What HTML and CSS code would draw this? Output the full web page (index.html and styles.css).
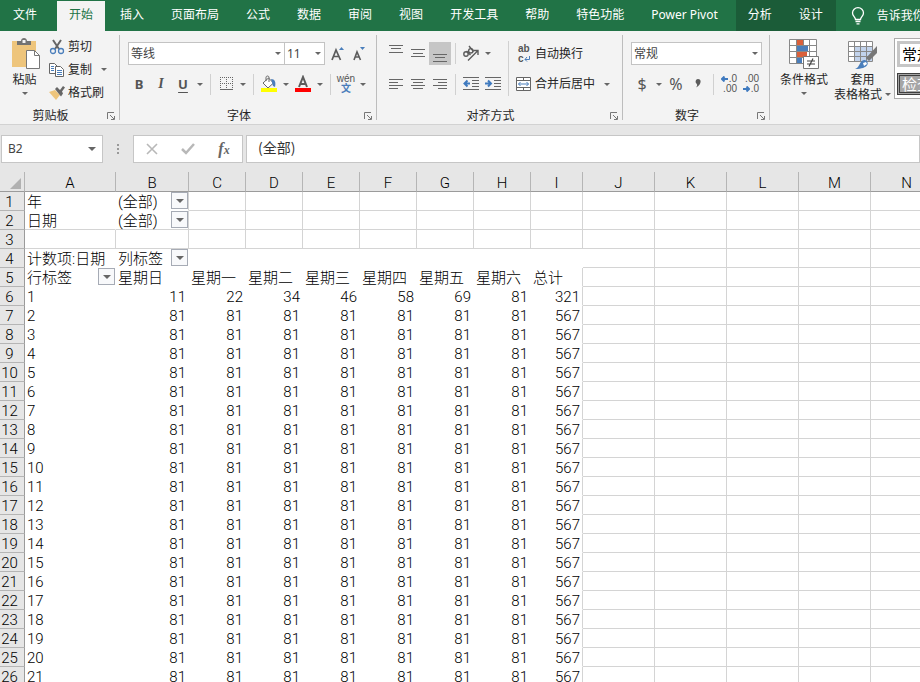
FILE: index.html
```html
<!DOCTYPE html>
<html lang="zh-CN">
<head>
    <meta charset="UTF-8">
    <meta name="viewport" content="width=device-width, initial-scale=1.0">
    <title>数据透视表</title>
    <link rel="stylesheet" href="styles.css">
</head>
<body>
    <!-- 選單 -->
    <nav class="tabs">
        <a class="tab file" href="#">文件</a>
        <a class="tab active" href="#">开始</a>
        <a class="tab" href="#">插入</a>
        <a class="tab" href="#">页面布局</a>
        <a class="tab" href="#">公式</a>
        <a class="tab" href="#">数据</a>
        <a class="tab" href="#">审阅</a>
        <a class="tab" href="#">视图</a>
        <a class="tab" href="#">开发工具</a>
        <a class="tab" href="#">帮助</a>
        <a class="tab" href="#">特色功能</a>
        <a class="tab" href="#">Power Pivot</a>
        <div class="context-tabs">
            <a class="tab" href="#">分析</a>
            <a class="tab" href="#">设计</a>
        </div>
        <a class="tell-me" href="#">
            <svg width="14" height="18" viewBox="0 0 14 18" fill="none" stroke="#fff" stroke-width="1.3"><path d="M4.5 12.5c0-2.500-3-3.500-3-6.500a5.500 5.300 0 0 1 11 0c0 3-3 4-3 6.500zM4.500 14.500h5M5.500 16.800h3"/></svg>
            告诉我你想要做什么
        </a>
    </nav>

    <!-- 功能區 -->
    <div class="ribbon">
        <section class="group clipboard">
            <div class="group-body">
                <button class="big-btn">
                    <svg width="30" height="32" viewBox="0 0 30 32"><path fill="#eec57c" d="M2 3h24v26H2z"/><path fill="#737373" d="M7 3h4c0-4 6-4 6 0h4v4H7z"/><path fill="#f3f3f3" d="M12.500 2h3v3h-3z"/><path fill="#fff" stroke="#777" d="M16.500 12.500h8l5 5v13h-13z"/><path fill="none" stroke="#777" d="M24.500 12.500v5h5"/></svg>
                    <span>粘贴</span>
                    <i class="arrow"></i>
                </button>
                <div class="btn-list">
                    <button class="text-btn">
                        <svg width="16" height="16" viewBox="0 0 16 16" fill="none"><path stroke="#666" stroke-width="2" d="M4 1l6 9M12 1l-6 9"/><circle cx="4" cy="12" r="2.500" stroke="#4a7ebb" stroke-width="1.300"/><circle cx="12" cy="12" r="2.500" stroke="#4a7ebb" stroke-width="1.300"/></svg>
                        剪切
                    </button>
                    <button class="text-btn">
                        <svg width="16" height="16" viewBox="0 0 16 16" fill="#fff" stroke="#666"><path d="M.5 1.500h5l3 3v7h-8z"/><path stroke="#4a7ebb" d="M2 4.500h3M2 6.500h3M2 8.500h3"/><path d="M6.500 4.500h5l3 3v7h-8z"/><path stroke="#4a7ebb" d="M8 8.500h5M8 10.500h5M8 12.500h5"/></svg>
                        复制
                        <i class="arrow"></i>
                    </button>
                    <button class="text-btn">
                        <svg width="16" height="16" viewBox="0 0 16 16"><path fill="#eec57c" d="M0 7l6-2 5 5-4 5z"/><path fill="#666" d="M6 4l2-2 3 3 3-4 2 1.500-3 4 1 2-2 3z"/></svg>
                        格式刷
                    </button>
                </div>
            </div>
            <div class="group-title">剪贴板 <svg class="launcher" width="9" height="9" viewBox="0 0 9 9"><path d="M.5 7V.5H7M3 3l4 4M7.500 4v3.500H4"/></svg></div>
        </section>
        <div class="line"></div>

        <section class="group font">
            <div class="group-body rows">
                <div class="row">
                    <div class="select-box font-name">
                        <select aria-label="字体"><option>等线</option></select><i class="arrow"></i>
                    </div>
                    <div class="select-box font-size">
                        <select aria-label="字号"><option>11</option></select><i class="arrow"></i>
                    </div>
                    <button class="icon-btn" aria-label="增大字号"><svg width="16" height="18" viewBox="0 0 16 18"><path fill="none" stroke="#5c5c5c" stroke-width="1.700" d="M2 15L6 5l4.500 10M3.500 11.500h5.500"/><path fill="#4a7ebb" d="M9 5l2.500-3L14 5z"/></svg></button>
                    <button class="icon-btn" aria-label="减小字号"><svg width="16" height="18" viewBox="0 0 16 18"><path fill="none" stroke="#5c5c5c" stroke-width="1.600" d="M2 15l3-8 3.500 8M3 12h4.500"/><path fill="#4a7ebb" d="M8 2h5l-2.500 3z"/></svg></button>
                </div>
                <div class="row">
                    <button class="icon-btn bold">B</button>
                    <button class="icon-btn italic">I</button>
                    <button class="icon-btn underline">U</button>
                    <button class="drop" aria-label="下划线"><i class="arrow"></i></button>
                    <span class="sep"></span>
                    <button class="icon-btn" aria-label="边框"><svg width="13" height="14" viewBox="0 0 13 14" fill="none" stroke="#666"><path stroke-dasharray="1 1" d="M0 .5h13M0 6.500h13M.5 0v12M6.500 0v12M12.500 0v12"/><path d="M0 12.500h13"/></svg></button>
                    <button class="drop" aria-label="边框选项"><i class="arrow"></i></button>
                    <span class="sep"></span>
                    <button class="icon-btn" aria-label="填充颜色"><svg width="16" height="18" viewBox="0 0 16 18"><path fill="#fff" stroke="#666" d="M7.500 3l5 5-5.500 5-5-5z"/><path fill="none" stroke="#666" d="M5 6V2.500C5 .5 8 .5 8 2.500V7"/><path fill="#4a7ebb" d="M10 4c4 0 5 3 4 8l-2-1z"/><path fill="#ff0" d="M0 13h16v4H0z"/></svg></button>
                    <button class="drop" aria-label="填充颜色选项"><i class="arrow"></i></button>
                    <button class="icon-btn" aria-label="字体颜色"><svg width="16" height="18" viewBox="0 0 16 18"><path fill="none" stroke="#5c5c5c" stroke-width="2" d="M4 12L8 2l4 10M5 9h6"/><path fill="#f00" d="M0 13h16v4H0z"/></svg></button>
                    <button class="drop" aria-label="字体颜色选项"><i class="arrow"></i></button>
                    <span class="sep"></span>
                    <button class="icon-btn pinyin"><span>wén</span><b>文</b></button>
                    <button class="drop" aria-label="拼音选项"><i class="arrow"></i></button>
                </div>
            </div>
            <div class="group-title">字体 <svg class="launcher" width="9" height="9" viewBox="0 0 9 9"><path d="M.5 7V.5H7M3 3l4 4M7.500 4v3.500H4"/></svg></div>
        </section>
        <div class="line"></div>

        <section class="group align">
            <div class="group-body">
                <div class="rows">
                    <div class="row">
                        <button class="icon-btn" aria-label="顶端对齐"><svg class="bars" width="14" height="18" viewBox="0 0 14 18"><path d="M0 .5h14M2 3.500h10M0 7.500h14"/></svg></button>
                        <button class="icon-btn" aria-label="垂直居中"><svg class="bars" width="14" height="18" viewBox="0 0 14 18"><path d="M0 4.500h14M2 8.500h10M0 11.500h14"/></svg></button>
                        <button class="icon-btn pressed" aria-label="底端对齐"><svg class="bars" width="14" height="18" viewBox="0 0 14 18"><path d="M0 9.500h14M2 12.500h10M0 16.500h14"/></svg></button>
                        <span class="sep"></span>
                        <button class="icon-btn" aria-label="方向"><svg width="18" height="18" viewBox="0 0 18 18" fill="none" stroke="#5c5c5c" stroke-width="1.400"><circle cx="4" cy="9" r="2.200"/><path d="M4.500 6l4 4M7 1l4.500 5.500"/><circle cx="8.800" cy="5.800" r="2.200"/><path d="M6 15.500l9.500-9.500M11.500 5.500H16V10"/></svg></button>
                        <button class="drop" aria-label="方向选项"><i class="arrow"></i></button>
                    </div>
                    <div class="row">
                        <button class="icon-btn" aria-label="左对齐"><svg class="bars" width="14" height="12" viewBox="0 0 14 12"><path d="M0 1.500h14M0 4.500h9M0 7.500h14M0 10.500h9"/></svg></button>
                        <button class="icon-btn" aria-label="居中"><svg class="bars" width="14" height="12" viewBox="0 0 14 12"><path d="M0 1.500h14M2 4.500h10M0 7.500h14M2 10.500h10"/></svg></button>
                        <button class="icon-btn" aria-label="右对齐"><svg class="bars" width="14" height="12" viewBox="0 0 14 12"><path d="M0 1.500h14M5 4.500h9M0 7.500h14M5 10.500h9"/></svg></button>
                        <span class="sep"></span>
                        <button class="icon-btn" aria-label="减少缩进量"><svg class="bars" width="16" height="14" viewBox="0 0 16 14"><path d="M0 .5h16M9 3.500h7M9 6.500h7M9 9.500h7M0 12.500h16"/><path class="blue" d="M7 6.500H1M4.500 3.500L1.500 6.500l3 3"/></svg></button>
                        <button class="icon-btn" aria-label="增加缩进量"><svg class="bars" width="16" height="14" viewBox="0 0 16 14"><path d="M0 .5h16M9 3.500h7M9 6.500h7M9 9.500h7M0 12.500h16"/><path class="blue" d="M0 6.500h6M3 3.500l3 3-3 3"/></svg></button>
                    </div>
                </div>
                <span class="sep tall"></span>
                <div class="rows">
                    <button class="text-btn">
                        <span class="wrap-icon"><b>ab</b><b>c<svg width="6" height="6" viewBox="0 0 6 6" fill="none" stroke="#4a7ebb"><path d="M5.500 0v3.500H1M3 1L1 3.500l2 2"/></svg></b></span>
                        自动换行
                    </button>
                    <button class="text-btn">
                        <svg width="16" height="16" viewBox="0 0 16 16"><path fill="#fff" stroke="#666" d="M.5 1.500h14v13H.5zM.5 4.500h14M.5 11.500h14M7.500 1v3M7.500 12v3"/><path fill="none" stroke="#4a7ebb" d="M2.500 8h10M4.500 6l-2 2 2 2M10.500 6l2 2-2 2"/></svg>
                        合并后居中
                        <i class="arrow"></i>
                    </button>
                </div>
            </div>
            <div class="group-title">对齐方式 <svg class="launcher" width="9" height="9" viewBox="0 0 9 9"><path d="M.5 7V.5H7M3 3l4 4M7.500 4v3.500H4"/></svg></div>
        </section>
        <div class="line"></div>

        <section class="group number">
            <div class="group-body rows">
                <div class="row">
                    <div class="select-box format">
                        <select aria-label="数字格式"><option>常规</option></select><i class="arrow"></i>
                    </div>
                </div>
                <div class="row">
                    <button class="icon-btn sign">$</button>
                    <button class="drop" aria-label="货币选项"><i class="arrow"></i></button>
                    <button class="icon-btn sign">%</button>
                    <button class="icon-btn" aria-label="千位分隔"><svg width="6" height="10" viewBox="0 0 6 10"><path fill="#5c5c5c" d="M3 0c4 0 3.500 6-2 8.500C3 6 2 5 1 4 0 2.500 1 0 3 0z"/></svg></button>
                    <span class="sep"></span>
                    <button class="icon-btn decimal"><span><svg width="7" height="6" viewBox="0 0 7 6"><path d="M7 3H1M3.500 .5L1 3l2.500 2.500"/></svg>.0</span><span>.00</span></button>
                    <button class="icon-btn decimal"><span>.00</span><span><svg width="7" height="6" viewBox="0 0 7 6"><path d="M0 3h6M3.500 .5L6 3 3.500 5.500"/></svg>.0</span></button>
                </div>
            </div>
            <div class="group-title">数字 <svg class="launcher" width="9" height="9" viewBox="0 0 9 9"><path d="M.5 7V.5H7M3 3l4 4M7.500 4v3.500H4"/></svg></div>
        </section>
        <div class="line"></div>

        <section class="group styles">
            <div class="group-body">
                <button class="big-btn">
                    <svg width="30" height="32" viewBox="0 0 30 32"><path fill="#fff" d="M.5 1.500h27v24H.5z"/><path fill="#d9603b" d="M8 2h6v5H8zM8 14h10v5H8z"/><path fill="#4a7ebb" d="M8 8h11v5H8zM8 20h5v5H8z"/><path fill="none" stroke="#888" d="M.5 1.500h27v24H.5zM.5 7.500h27M.5 13.500h27M.5 19.500h27M7.500 1v25M14.500 1v6M20.500 1v24"/><path fill="#fff" stroke="#777" d="M14.500 18.500h15v12h-15z"/><path stroke="#444" stroke-width="1.200" d="M18 23h8M18 26h8M24 20.500l-4 8"/></svg>
                    <span>条件格式</span>
                    <i class="arrow"></i>
                </button>
                <button class="big-btn">
                    <svg width="30" height="32" viewBox="0 0 30 32"><path fill="#fff" d="M.5 3.500h24v20H.5z"/><path fill="#c2d3ec" d="M7 9h17v14H7z"/><path fill="none" stroke="#888" d="M.5 3.500h24v20H.5zM.5 8.500h24M.5 13.500h24M.5 18.500h24M6.500 3v21M12.500 3v21M18.500 3v21"/><path fill="#777" d="M29 8v7l-8 8-3-3z"/><path fill="#4a7ebb" d="M7 31c5-1 4-9 10-9 5 2 4 9-10 9z"/><path fill="#fff" d="M15 25l3-1 1 2-3 2z"/></svg>
                    <span>套用</span>
                    <span class="nowrap">表格格式<i class="arrow"></i></span>
                </button>
                <div class="gallery">
                    <button class="style-item normal">常规</button>
                    <button class="style-item check">检查单元格</button>
                </div>
            </div>
        </section>
    </div>

    <!-- 編輯列 -->
    <div class="formula-bar">
        <div class="name-box">
            <input type="text" value="B2" aria-label="名称框"><i class="arrow wide"></i>
        </div>
        <svg class="dots" width="3" height="12" viewBox="0 0 3 12"><path fill="#999" d="M0 0h2v2H0zM0 4h2v2H0zM0 8h2v2H0z"/></svg>
        <div class="formula-btns">
            <button aria-label="取消"><svg width="12" height="12" viewBox="0 0 12 12" fill="none" stroke="#b8b8b8" stroke-width="1.600"><path d="M1 1l10 10M11 1L1 11"/></svg></button>
            <button aria-label="输入"><svg width="14" height="12" viewBox="0 0 14 12" fill="none" stroke="#b8b8b8" stroke-width="2.500"><path d="M1 6l4 4 8-9"/></svg></button>
            <button class="fx">f<small>x</small></button>
        </div>
        <input class="formula" type="text" value="(全部)" aria-label="编辑栏">
    </div>

    <!-- 工作表 -->
    <div class="sheet">
        <table>
            <colgroup>
                <col class="w-head"><col class="w-a"><col class="w-b">
                <col class="w-day"><col class="w-day"><col class="w-day"><col class="w-day"><col class="w-day"><col class="w-day">
                <col class="w-total"><col class="w-std"><col class="w-std"><col class="w-std"><col class="w-std"><col class="w-std">
            </colgroup>
            <thead>
                <tr>
                    <th class="corner"><svg width="11" height="11" viewBox="0 0 11 11"><path fill="#b1b1b1" d="M11 0v11H0z"/></svg></th>
                    <th>A</th><th>B</th><th>C</th><th>D</th><th>E</th><th>F</th><th>G</th><th>H</th><th>I</th><th>J</th><th>K</th><th>L</th><th>M</th><th>N</th>
                </tr>
            </thead>
            <tbody id="rows">
                <tr>
                    <th>1</th><td class="no-line">年</td>
                    <td class="no-bottom"><div class="filter">(全部)<button aria-label="筛选年"><i class="arrow wide"></i></button></div></td>
                    <td></td><td></td><td></td><td></td><td></td><td></td><td></td><td></td><td></td><td></td><td></td><td></td>
                </tr>
                <tr>
                    <th>2</th><td class="no-right">日期</td>
                    <td><div class="filter">(全部)<button aria-label="筛选日期"><i class="arrow wide"></i></button></div></td>
                    <td></td><td></td><td></td><td></td><td></td><td></td><td></td><td></td><td></td><td></td><td></td><td></td>
                </tr>
                <tr>
                    <th>3</th><td></td><td></td><td></td><td></td><td></td><td></td><td></td><td></td><td></td><td></td><td></td><td></td><td></td><td></td>
                </tr>
                <tr>
                    <th>4</th><td class="no-line">计数项:日期</td>
                    <td class="no-line"><div class="filter">列标签<button aria-label="筛选列标签"><i class="arrow wide"></i></button></div></td>
                    <td class="no-line"></td><td class="no-line"></td><td class="no-line"></td><td class="no-line"></td><td class="no-line"></td><td class="no-line"></td><td class="no-line"></td>
                    <td></td><td></td><td></td><td></td><td></td>
                </tr>
                <tr>
                    <th>5</th>
                    <td class="no-line"><div class="filter">行标签<button aria-label="筛选行标签"><i class="arrow wide"></i></button></div></td>
                    <td class="no-line">星期日</td><td class="no-line">星期一</td><td class="no-line">星期二</td><td class="no-line">星期三</td><td class="no-line">星期四</td><td class="no-line">星期五</td><td class="no-line">星期六</td><td class="no-bottom">总计</td>
                    <td></td><td></td><td></td><td></td><td></td>
                </tr>
            </tbody>
        </table>
    </div>

    <script>
        let rows=document.querySelector('#rows')
        let first=[11, 22, 34, 46, 58, 69, 81, 321]
        let other=[81, 81, 81, 81, 81, 81, 81, 567]

        /* 先列出1~21日，從第6列開始 */
        for(let day=1; day<=21; day++){
            let values=day === 1 ? first : other
            let html=`<th>${day + 5}</th><td class="no-line">${day}</td>`

            values.forEach(function(value, i){
                html+=`<td class="num ${i === 7 ? "no-bottom" : "no-line"}">${value}</td>`
            })

            html+="<td></td>".repeat(5)
            let tr=document.createElement('tr')
            tr.innerHTML=html
            rows.appendChild(tr)
        }
    </script>
</body>
</html>
```

FILE: styles.css
```css
*{
    box-sizing: border-box;
    margin: 0px;
    padding: 0px;
}
body{
    height: 100vh;
    display: flex;
    flex-direction: column;
    overflow: hidden;
    background: white;
    color: #262626;
    font: 12px/16px "Noto Sans", "Noto Sans CJK SC", sans-serif;
}
button, input, select{
    font: inherit;
    color: inherit;
    background: none;
    border: 0;
    border-radius: 0;
}
svg{
    display: block;
    flex: none;
}
.arrow{
    flex: none;
    width: 0;
    height: 0;
    border: 3px solid transparent;
    border-top-color: #666;
    border-bottom: 0;
}
.arrow.wide{
    border-width: 4px 4px 0;
}

/* 選單 */
.tabs{
    display: flex;
    flex: none;
    gap: 3px;
    height: 31px;
    padding-left: 1px;
    background: #217346;
    overflow: hidden;
}
.tab, .tell-me{
    flex: none;
    padding: 0 12px;
    color: white;
    line-height: 30px;
    text-decoration: none;
    white-space: nowrap;
}
.tab.file{
    margin-right: 5px;
}
.tab.active{
    margin-top: 1px;
    background: #f3f3f3;
    color: #217346;
    line-height: 28px;
}
.context-tabs{
    display: flex;
    flex: none;
    gap: 3px;
    margin-left: 3px;
    padding-right: 1px;
    background: #1b5c38;
}
.tell-me{
    display: flex;
    align-items: center;
    gap: 12px;
}

/* 功能區 */
.ribbon{
    display: flex;
    flex: none;
    padding-top: 4px;
    background: #f3f3f3;
    border-bottom: 1px solid #d2d2d2;
    overflow: hidden;
}
.line{
    flex: none;
    width: 1px;
    margin-bottom: 4px;
    background: #bdbdbd;
}
.group{
    flex: none;
}
.group-body{
    display: flex;
    height: 69px;
}
.group-title{
    position: relative;
    height: 20px;
    line-height: 23px;
    text-align: center;
    padding-right: 18px;
}
.launcher{
    position: absolute;
    right: 3px;
    bottom: 3px;
    fill: none;
    stroke: #777;
}
.big-btn{
    display: flex;
    flex-direction: column;
    align-items: center;
    padding: 3px 2px 0;
    line-height: 15px;
}
.big-btn svg{
    margin-bottom: 2px;
}
.big-btn > .arrow{
    margin-top: 5px;
}
.nowrap{
    display: flex;
    align-items: center;
    gap: 3px;
    white-space: nowrap;
}
.clipboard{
    width: 119px;
}
.clipboard .big-btn{
    width: 49px;
}
.btn-list{
    display: grid;
    grid-template-rows: 23px 23px 23px;
}
.text-btn{
    display: flex;
    align-items: center;
    gap: 3px;
    white-space: nowrap;
}
.text-btn .arrow{
    margin-left: 6px;
}
.rows{
    display: grid;
    grid-template-rows: 23px 22px;
    row-gap: 8px;
    padding-top: 7px;
}
.row{
    display: flex;
    align-items: center;
}
.font .rows{
    padding-left: 8px;
    padding-right: 5px;
}
.align .group-body{
    padding-left: 8px;
    padding-right: 12px;
}
.number .rows{
    padding-left: 8px;
    padding-right: 7px;
}
.select-box{
    position: relative;
    display: flex;
    height: 23px;
}
.select-box select{
    width: 100%;
    padding: 0 2px;
    appearance: none;
    background: white;
    border: 1px solid #c3c3c3;
    color: #444;
}
.select-box .arrow{
    position: absolute;
    right: 4px;
    top: 10px;
}
.font-name{
    width: 157px;
}
.font-size{
    width: 41px;
    margin-left: -1px;
    margin-right: 2px;
}
.format{
    width: 131px;
}
.icon-btn{
    display: flex;
    flex: none;
    align-items: center;
    justify-content: center;
    width: 22px;
    height: 100%;
    color: #555;
}
.pressed{
    background: #c6c6c6;
}
.bold{
    font-weight: bold;
    font-size: 13px;
}
.italic{
    font: italic bold 14px "Liberation Serif", serif;
}
.underline{
    font-weight: bold;
    font-size: 13px;
    text-decoration: underline;
    text-underline-offset: 3px;
}
.sign{
    font-size: 16px;
}
.drop{
    display: flex;
    flex: none;
    align-items: center;
    justify-content: center;
    width: 12px;
    height: 100%;
}
.sep{
    flex: none;
    width: 1px;
    height: 21px;
    margin: 0 4px;
    background: #d0d0d0;
}
.sep.tall{
    height: 55px;
    margin-top: 6px;
}
.pinyin{
    flex-direction: column;
    font: 10px/10px "Liberation Sans", "Noto Sans CJK SC", sans-serif;
}
.pinyin b{
    color: #4a7ebb;
}
.bars{
    fill: none;
    stroke: #666;
}
.bars .blue{
    stroke: #3f7abf;
    stroke-width: 2;
}
.align .text-btn{
    padding-left: 3px;
}
.wrap-icon{
    display: flex;
    flex-direction: column;
    width: 16px;
    padding-left: 2px;
    color: #555;
    font: 10px/10px "Liberation Sans", sans-serif;
    text-align: left;
}
.wrap-icon svg{
    display: inline-block;
}
.decimal{
    flex-direction: column;
    align-items: flex-end;
    padding-right: 3px;
    font: 10px/10px "Liberation Sans", sans-serif;
}
.decimal svg{
    display: inline-block;
    margin-right: 1px;
    fill: none;
    stroke: #3f7abf;
    stroke-width: 2;
}
.styles .group-body{
    padding-left: 8px;
}
.styles .big-btn:nth-child(2){
    padding-left: 4px;
}
.gallery{
    display: grid;
    align-content: start;
    gap: 6px;
    width: 200px;
    height: 61px;
    margin-top: 3px;
    margin-left: 1px;
    padding: 2px;
    background: white;
    border: 1px solid #ababab;
}
.style-item{
    height: 26px;
    padding-left: 2px;
    font: 15px/20px "Noto Sans CJK SC", sans-serif;
    text-align: left;
}
.normal{
    border: 3px solid #c6c6c6;
    color: black;
}
.check{
    height: 22px;
    line-height: 16px;
    background: #a5a5a5;
    border: 3px double #3f3f3f;
    color: white;
}

/* 編輯列 */
.formula-bar{
    display: flex;
    flex: none;
    height: 47px;
    padding: 10px 0 9px 1px;
    background: #e6e6e6;
}
.name-box, .formula-btns, .formula{
    background: white;
    border: 1px solid #c6c6c6;
}
.name-box{
    display: flex;
    align-items: center;
    width: 102px;
    padding: 0 6px;
    color: #444;
}
.name-box input{
    width: 100%;
}
.dots{
    margin: 9px 14px;
}
.formula-btns{
    display: flex;
    width: 110px;
    margin-right: 3px;
    margin-left: -1px;
}
.formula-btns button{
    display: flex;
    align-items: center;
    justify-content: center;
    width: 36px;
}
.formula-btns .fx{
    color: #666;
    font: italic bold 16px "Liberation Serif", serif;
}
.fx small{
    padding-top: 3px;
    font-size: 12px;
}
.formula{
    flex: 1;
    min-width: 0;
    padding-left: 11px;
    padding-bottom: 4px;
    color: #333;
    font: 14px "Noto Sans CJK SC", sans-serif;
}

/* 工作表 */
.sheet{
    flex: 1;
    min-height: 0;
    overflow: hidden;
}
.sheet table{
    width: 0;
    table-layout: fixed;
    border-collapse: separate;
    border-spacing: 0;
    color: black;
    font: 300 15px/15px Roboto, "Noto Sans CJK SC", sans-serif;
}
.w-head{
    width: 25px;
}
.w-a{
    width: 91px;
}
.w-b{
    width: 73px;
}
.w-day{
    width: 57px;
}
.w-total{
    width: 52px;
}
.w-std{
    width: 72px;
}
.sheet th{
    height: 19px;
    padding-top: 3px;
    background: #e6e6e6;
    border-right: 1px solid #b5b5b5;
    border-bottom: 1px solid #b5b5b5;
    font-weight: 300;
}
.sheet thead th{
    height: 20px;
    padding-top: 4px;
    border-bottom-color: #9b9b9b;
}
.sheet tbody th{
    padding-right: 5px;
    border-right-color: #9b9b9b;
}
.sheet .corner svg{
    margin-left: 10px;
}
.sheet td{
    height: 19px;
    padding-top: 3px;
    padding-left: 2px;
    border-right: 1px solid #d4d4d4;
    border-bottom: 1px solid #d4d4d4;
    white-space: nowrap;
}
.sheet .num{
    padding-right: 2px;
    text-align: right;
}
.sheet .no-line{
    border-color: white;
}
.sheet .no-bottom{
    border-bottom-color: white;
}
.sheet .no-right{
    border-right-color: white;
}
.filter{
    display: flex;
    justify-content: space-between;
    height: 15px;
}
/* 按鈕貼齊儲存格上緣 */
.filter button{
    display: flex;
    align-items: center;
    justify-content: center;
    width: 17px;
    height: 17px;
    margin-top: -3px;
    background: #f8f9fb;
    border: 1px solid #a6abb5;
}
```
